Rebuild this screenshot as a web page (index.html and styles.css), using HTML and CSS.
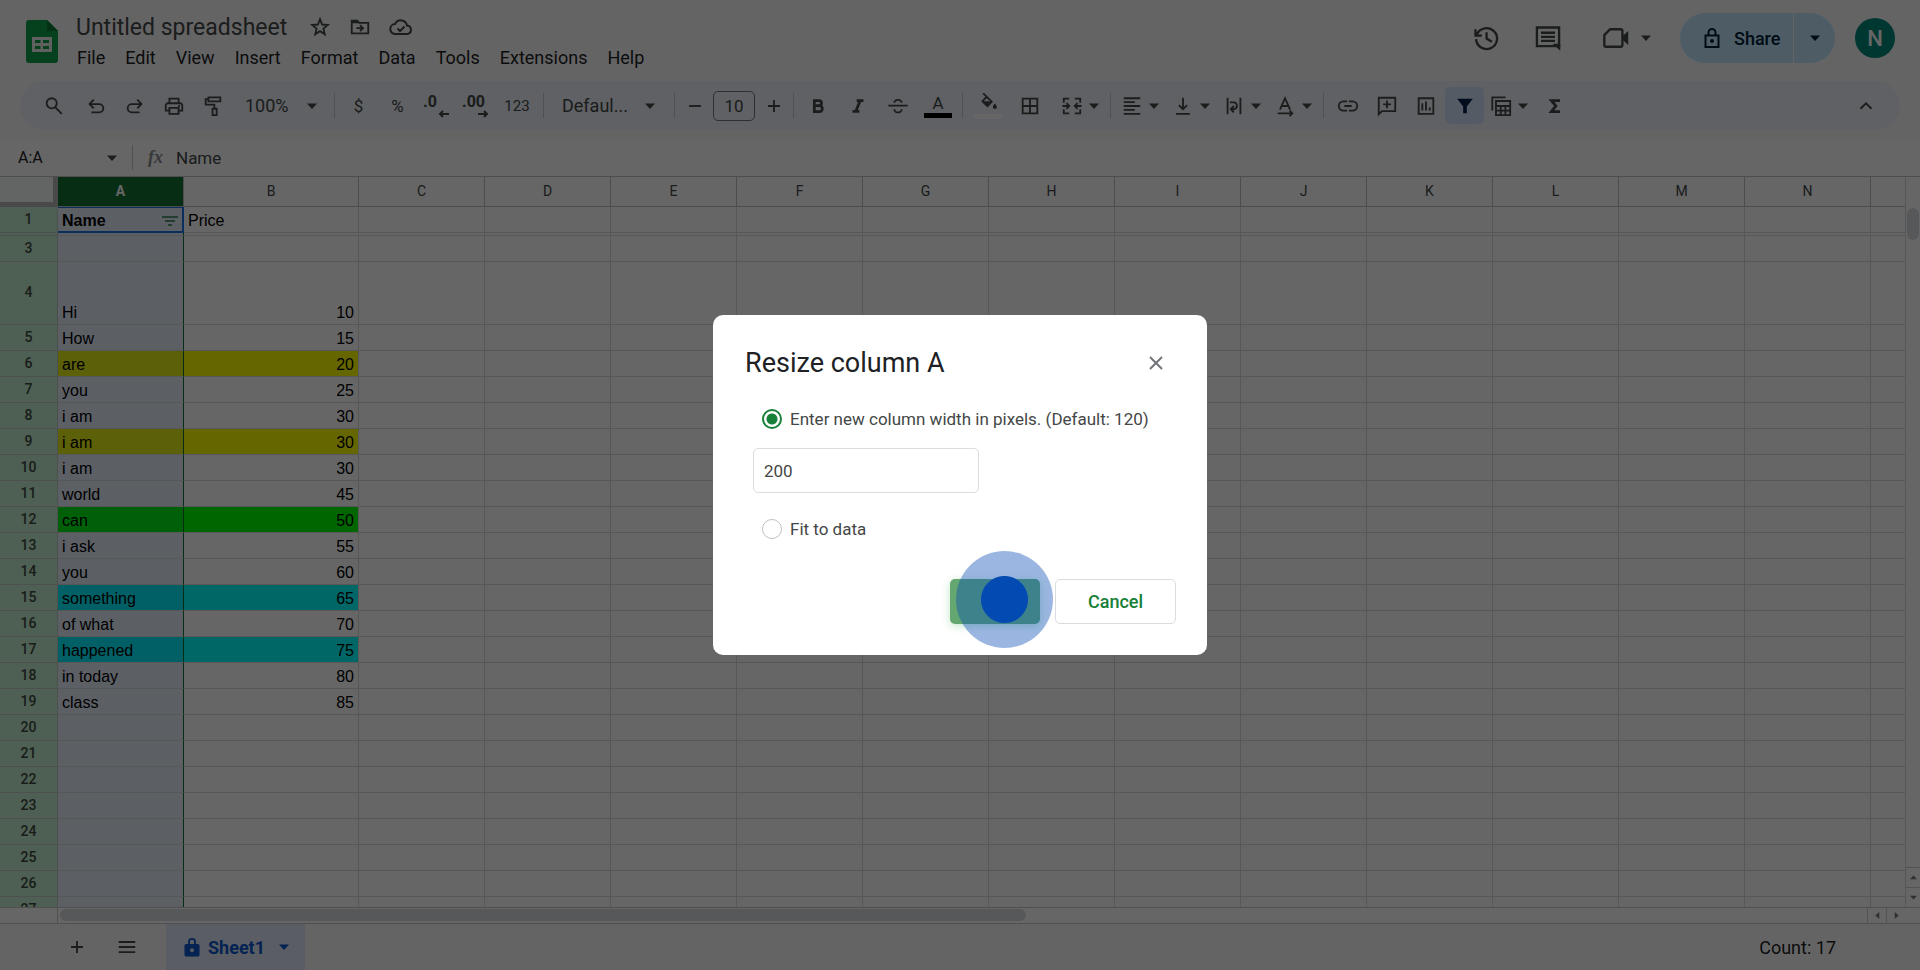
FILE: index.html
```
<!DOCTYPE html>
<html lang="en">
<head>
  <meta charset="UTF-8">
  <meta name="viewport" content="width=device-width, initial-scale=1.0">
  <title>Untitled spreadsheet</title>
  <link rel="stylesheet" href="styles.css">
</head>
<body>

  <!-- Shared icons -->
  <svg class="sprite" aria-hidden="true">
    <symbol id="caret" viewBox="0 0 10 10"><path d="M0 2.500h10L5 8z"/></symbol>
    <symbol id="lock" viewBox="0 0 16 20"><path fill-rule="evenodd" d="M4 7V5a4 4 0 0 1 8 0v2h2a1.500 1.500 0 0 1 1.500 1.500v9.500a1.500 1.500 0 0 1-1.500 1.500H2A1.500 1.500 0 0 1 .5 18V8.500A1.500 1.500 0 0 1 2 7zM5.800 7h4.400V5a2.200 2.200 0 0 0-4.400 0zM8 11.200a2 2 0 1 0 0 4 2 2 0 0 0 0-4z"/></symbol>
  </svg>

  <div class="app">
    <header class="header">
      <svg class="logo" viewBox="0 0 32 43">
        <path fill="#0fa24b" d="M3 0h18l11 11v29a3 3 0 0 1-3 3H3a3 3 0 0 1-3-3V3a3 3 0 0 1 3-3z"/>
        <path fill="#0a7a35" d="M21 0l11 11H21z"/>
        <path fill="#f1f1f1" fill-rule="evenodd" d="M6 17h20v15H6zm3 3v3h5.500v-3zm8 0v3h6v-3zm-8 6v3h5.500v-3zm8 0v3h6v-3z"/>
      </svg>
      <div class="doc">
        <div class="title-row">
          <h1>Untitled spreadsheet</h1>
          <button class="plain" aria-label="Star"><svg class="ico" viewBox="0 0 24 24"><path class="line" d="M12 3.500l2.300 5.800 6.200.5-4.800 4 1.500 6.200-5.200-3.400L6.800 20l1.500-6.200-4.800-4 6.200-.5z"/></svg></button>
          <button class="plain" aria-label="Move"><svg class="ico" viewBox="0 0 24 24"><path class="line" d="M3 5h6l2 2.500h10V19H3z"/><path d="M3 5h6l2 3H3z"/><path class="line" d="M8 13.300h7M12 10l3.300 3.300L12 16.500"/></svg></button>
          <button class="plain" aria-label="Document status"><svg class="ico-cloud" viewBox="0 0 24 24"><path class="line" d="M6.500 19a5 5 0 0 1-.4-10A6.300 6.300 0 0 1 18 10.500a4.300 4.300 0 0 1 .5 8.500z"/><path class="line" d="M8.500 13.500l2.500 2.500 4.500-4.500"/></svg></button>
        </div>
        <nav class="menus">
          <button>File</button>
          <button>Edit</button>
          <button>View</button>
          <button>Insert</button>
          <button>Format</button>
          <button>Data</button>
          <button>Tools</button>
          <button>Extensions</button>
          <button>Help</button>
        </nav>
      </div>
      <div class="header-actions">
        <button class="plain" aria-label="Version history"><svg class="ico-lg" viewBox="0 0 24 24"><path class="line" d="M4.200 9A9 9 0 1 1 3.500 13M3 4.500V10h5.500M12.500 7v5.500l4.500 2.700"/></svg></button>
        <button class="plain" aria-label="Comments"><svg class="ico-lg" viewBox="0 0 24 24"><path class="line" d="M2.500 3h19v16h-19z"/><path d="M22.500 23V17H16z"/><path class="line" d="M6 7.500h12M6 11h12M6 14.500h12"/></svg></button>
        <button class="plain meet" aria-label="Meet"><svg class="ico-lg" viewBox="0 0 24 24"><path class="line" d="M7 4.500h9a1.500 1.500 0 0 1 1.500 1.500v12a1.500 1.500 0 0 1-1.500 1.500H3.500A1.500 1.500 0 0 1 2 18V9.500z"/><path d="M17.500 10.500L22.500 6v12l-5-4.500z"/></svg><svg class="caret"><use href="#caret"/></svg></button>
        <div class="share">
          <button class="share-main"><svg class="share-lock" viewBox="0 0 16 20"><path class="line" d="M1.500 7.500h13V19h-13zM4.500 7V4.500a3.500 3.500 0 0 1 7 0V7"/><circle cx="8" cy="13" r="2"/></svg>Share</button>
          <button class="share-more" aria-label="Quick sharing"><svg class="caret"><use href="#caret"/></svg></button>
        </div>
        <button class="avatar" aria-label="Account">N</button>
      </div>
    </header>

    <div class="toolbar">
      <button class="tool search" aria-label="Search"><svg class="ico" viewBox="0 0 24 24"><circle class="line" cx="9.500" cy="9" r="5.500"/><path class="line" d="M13.500 13.500l7 7"/></svg></button>
      <button class="tool" aria-label="Undo"><svg class="ico" viewBox="0 0 24 24"><path class="line" d="M7 19h8.500a4.500 4.500 0 0 0 0-9H5M9.500 5L5 9.800l4.500 4.700"/></svg></button>
      <button class="tool" aria-label="Redo"><svg class="ico" viewBox="0 0 24 24"><path class="line" d="M17 19H8.500a4.500 4.500 0 0 1 0-9H19M14.500 5L19 9.800l-4.500 4.700"/></svg></button>
      <button class="tool" aria-label="Print"><svg class="ico" viewBox="0 0 24 24"><path class="line" d="M7 8V4h10v4M7 17H3v-5.500A2.500 2.500 0 0 1 5.500 9h13a2.500 2.500 0 0 1 2.500 2.500V17h-4M7 14h10v6.500H7z"/><circle cx="17.500" cy="12" r="1.200"/></svg></button>
      <button class="tool" aria-label="Paint format"><svg class="ico" viewBox="0 0 24 24"><path class="line" d="M7 2.500h13V7H7zM7 4.500H4v6h9.500V15M11.500 15H16v7h-4.500z"/></svg></button>
      <button class="zoom">100%<svg class="caret"><use href="#caret"/></svg></button>
      <span class="divider"></span>
      <button class="tool">$</button>
      <button class="tool">%</button>
      <button class="tool dec" aria-label="Decrease decimal places"><span>.0</span><svg viewBox="0 0 12 8"><path class="line" d="M11 4H2M5 1L2 4l3 3"/></svg></button>
      <button class="tool dec" aria-label="Increase decimal places"><span>.00</span><svg viewBox="0 0 12 8"><path class="line" d="M1 4h9M7 1l3 3-3 3"/></svg></button>
      <button class="tool formats">123</button>
      <span class="divider"></span>
      <button class="font-name">Defaul...<svg class="caret"><use href="#caret"/></svg></button>
      <span class="divider"></span>
      <button class="tool step" aria-label="Decrease font size"><svg class="ico" viewBox="0 0 24 24"><path class="line" d="M5.500 12h13"/></svg></button>
      <input class="font-size" type="text" value="10" aria-label="Font size">
      <button class="tool step" aria-label="Increase font size"><svg class="ico" viewBox="0 0 24 24"><path class="line" d="M5.500 12h13M12 5.500v13"/></svg></button>
      <span class="divider"></span>
      <button class="tool text-tool" aria-label="Bold"><svg class="ico" viewBox="0 0 24 24"><path class="bold" d="M8 6h5a2.800 2.800 0 0 1 0 5.700H8zM8 11.700h5.600a3.100 3.100 0 0 1 0 6.300H8z"/></svg></button>
      <button class="tool text-tool" aria-label="Italic"><svg class="ico" viewBox="0 0 24 24"><path class="bold" d="M10.500 6.200H18M6 17.800h7.500M14.200 6.500l-4.500 11"/></svg></button>
      <button class="tool text-tool" aria-label="Strikethrough"><svg class="ico" viewBox="0 0 24 24"><path class="line" d="M1.500 11.500h21M16 8.500a4 3.200 0 0 0-8 0M8 15.500a4 3.500 0 0 0 8 0"/></svg></button>
      <button class="tool text-tool color-tool" aria-label="Text color"><span>A</span><i class="swatch black"></i></button>
      <span class="divider"></span>
      <button class="tool cell-tool color-tool" aria-label="Fill color"><svg class="ico" viewBox="0 0 24 24"><path fill-rule="evenodd" d="M6 2l1.500-1.300 10 10-6 6.300-7-7L9.200 5.300zM10.500 6.800L7.300 10h7.300z"/><path d="M19.500 12.500s2.200 2.300 2.200 3.800a2.200 2.200 0 0 1-4.400 0c0-1.500 2.200-3.800 2.200-3.800z"/></svg><i class="swatch white"></i></button>
      <button class="tool cell-tool" aria-label="Borders"><svg class="ico" viewBox="0 0 24 24"><path class="line" d="M4 4h16v16H4zM12 4v16M4 12h16"/></svg></button>
      <button class="combo merge" aria-label="Merge cells"><svg class="ico" viewBox="0 0 24 24"><path class="line" d="M9 4H3v4.500M3 15.500V20h6M15 4h6v4.500M21 15.500V20h-6M1.500 12h7M6 8.800L9 12l-3 3.200M22.500 12h-7M18 8.800L15 12l3 3.200"/></svg><svg class="caret"><use href="#caret"/></svg></button>
      <span class="divider"></span>
      <button class="combo" aria-label="Horizontal align"><svg class="ico" viewBox="0 0 24 24"><path class="line" d="M3 3.500h18M3 7.800h12M3 12h18M3 16.200h12M3 20.500h18"/></svg><svg class="caret"><use href="#caret"/></svg></button>
      <button class="combo" aria-label="Vertical align"><svg class="ico" viewBox="0 0 24 24"><path class="line" d="M12 3v12M7.500 11l4.500 4.500 4.500-4.500M4.500 20.500h15"/></svg><svg class="caret"><use href="#caret"/></svg></button>
      <button class="combo" aria-label="Text wrapping"><svg class="ico" viewBox="0 0 24 24"><path class="line" d="M5 3v18M19 3v18M7.500 8H12a3.800 3.800 0 0 1 0 7.500H9M11.800 12l-3.300 3.500 3.300 3.500"/></svg><svg class="caret"><use href="#caret"/></svg></button>
      <button class="combo" aria-label="Text rotation"><svg class="ico" viewBox="0 0 24 24"><path class="line" d="M6.500 16L12 3.500 17.500 16M8.500 12h7M4 20h16M17 17l3 3-3 3"/></svg><svg class="caret"><use href="#caret"/></svg></button>
      <span class="divider"></span>
      <button class="tool" aria-label="Insert link"><svg class="ico" viewBox="0 0 24 24"><path class="line" d="M11 7H7a5 5 0 0 0 0 10h4M13 7h4a5 5 0 0 1 0 10h-4M8 12h8"/></svg></button>
      <button class="tool" aria-label="Insert comment"><svg class="ico" viewBox="0 0 24 24"><path class="line" d="M3 21V3h18v14.500H6.500zM12 6v8.500M7.800 10.200h8.500"/></svg></button>
      <button class="tool" aria-label="Insert chart"><svg class="ico" viewBox="0 0 24 24"><path class="line" d="M4 3.500h16v17H4zM8 9v8M12 7v10M16 13.500V17"/></svg></button>
      <button class="tool filter-on" aria-label="Remove filter"><svg class="ico" viewBox="0 0 24 24"><path d="M3.500 4h17L14 12.500V20h-4v-7.500z"/></svg></button>
      <button class="combo" aria-label="Table views"><svg class="ico" viewBox="0 0 24 24"><path class="line" d="M2.500 17V2.500H17M6.500 6.500H22V22H6.500zM6.500 12H22M6.500 17H22M11.700 12v10M16.800 12v10"/></svg><svg class="caret"><use href="#caret"/></svg></button>
      <button class="tool" aria-label="Functions"><svg class="ico" viewBox="0 0 24 24"><path class="bold" d="M17.500 6H8l5 6-5 6h9.500"/></svg></button>
      <button class="tool collapse" aria-label="Hide menus"><svg class="ico" viewBox="0 0 24 24"><path class="line" d="M6 15l6-6 6 6"/></svg></button>
    </div>

    <div class="formula-bar">
      <input class="name-box" type="text" value="A:A" aria-label="Name box">
      <svg class="caret"><use href="#caret"/></svg>
      <span class="divider"></span>
      <span class="fx">fx</span>
      <input class="formula" type="text" value="Name" aria-label="Formula">
    </div>

    <main class="sheet">
      <div class="grid">
        <table>
          <colgroup id="cols"></colgroup>
          <thead><tr id="letters"></tr></thead>
          <tbody id="rows"></tbody>
        </table>
      </div>
      <div class="v-scroll">
        <div class="v-thumb"></div>
        <button aria-label="Scroll up"><svg class="arrow up"><use href="#caret"/></svg></button>
        <button aria-label="Scroll down"><svg class="arrow"><use href="#caret"/></svg></button>
      </div>
    </main>

    <div class="h-scroll">
      <div class="h-track"><div class="h-thumb"></div></div>
      <button aria-label="Scroll left"><svg class="arrow left"><use href="#caret"/></svg></button>
      <button aria-label="Scroll right"><svg class="arrow right"><use href="#caret"/></svg></button>
    </div>

    <footer class="tabs">
      <button class="plain" aria-label="Add sheet"><svg class="ico" viewBox="0 0 24 24"><path class="line" d="M5.500 12h13M12 5.500v13"/></svg></button>
      <button class="plain" aria-label="All sheets"><svg class="ico" viewBox="0 0 24 24"><path class="line" d="M3 6.500h18M3 12h18M3 17.500h18"/></svg></button>
      <button class="tab"><svg class="tab-lock"><use href="#lock"/></svg>Sheet1<svg class="caret"><use href="#caret"/></svg></button>
      <span class="count">Count: 17</span>
    </footer>
  </div>

  <div class="backdrop">
    <form class="dialog" role="dialog" aria-labelledby="dialog-title">
      <div class="dialog-head">
        <h2 id="dialog-title">Resize column A</h2>
        <button type="button" class="close" aria-label="Close"><svg viewBox="0 0 14 14"><path class="line" d="M1 1l12 12M13 1L1 13"/></svg></button>
      </div>
      <label class="option"><input type="radio" name="size" checked> Enter new column width in pixels. (Default: 120)</label>
      <input class="width-input" type="text" value="200" aria-label="Column width in pixels">
      <label class="option"><input type="radio" name="size"> Fit to data</label>
      <div class="actions">
        <button type="button" class="ok" aria-label="OK"><span class="click-mark"></span></button>
        <button type="button" class="cancel">Cancel</button>
      </div>
    </form>
  </div>

  <script>
    // The last column is only partly in view, so it has no letter
    const letters = [...'ABCDEFGHIJKLMN', ''];
    const data = {
      1: ['Name', 'Price'], 4: ['Hi', 10], 5: ['How', 15], 6: ['are', 20, 'yellow'],
      7: ['you', 25], 8: ['i am', 30], 9: ['i am', 30, 'yellow'], 10: ['i am', 30],
      11: ['world', 45], 12: ['can', 50, 'green'], 13: ['i ask', 55], 14: ['you', 60],
      15: ['something', 65, 'cyan'], 16: ['of what', 70], 17: ['happened', 75, 'cyan'],
      18: ['in today', 80], 19: ['class', 85]
    };

    // Column widths and letters
    document.getElementById('cols').innerHTML = '<col class="col-num">' +
      letters.map(l => `<col class="${l === 'B' ? 'col-b' : 'col'}">`).join('');
    document.getElementById('letters').innerHTML = '<th class="corner"></th>' +
      letters.map(l => `<th class="${l === 'A' ? 'selected' : ''}">${l}</th>`).join('');

    // Rows, row 2 is hidden
    let html = '';
    for (let n = 1; n <= 27; n++) {
      if (n === 2) {
        html += '<tr class="frozen"><th></th>' + letters.map(l => `<td class="${l === 'A' ? 'a' : ''}"></td>`).join('') + '</tr>';
        continue;
      }
      const row = data[n] || ['', ''];
      const color = row[2] || '';
      html += `<tr class="${n === 1 ? 'head' : n === 4 ? 'tall' : ''}"><th>${n}</th>`;
      html += `<td class="a ${color}">${row[0]}${n === 1 ? '<svg class="filter" viewBox="0 0 16 10"><path d="M0 0h16v2H0zM3 4h10v2H3zM6 8h4v2H6z"/></svg>' : ''}</td>`;
      html += `<td class="b ${color}">${row[1]}</td>`;
      html += '<td></td>'.repeat(letters.length - 2) + '</tr>';
    }
    document.getElementById('rows').innerHTML = html;
  </script>

</body>
</html>
```
FILE: styles.css
```
* {
  box-sizing: border-box;
}

body {
  margin: 0;
  font-family: Roboto, Arial, sans-serif;
  font-size: 17px;
  color: #444746;
  background-color: #f9fbfd;
  overflow: hidden;
}

button {
  font: inherit;
  color: inherit;
  background: none;
  border: none;
  padding: 0;
  cursor: pointer;
}

input {
  font: inherit;
  color: inherit;
}

svg {
  display: block;
  flex: none;
  fill: currentColor;
}

.line {
  fill: none;
  stroke: currentColor;
  stroke-width: 2;
}

.bold {
  fill: none;
  stroke: currentColor;
  stroke-width: 3;
}

.sprite {
  position: absolute;
  width: 0;
  height: 0;
}

.ico {
  width: 22px;
  height: 22px;
}

.ico-cloud {
  width: 24px;
  height: 24px;
}

.ico-lg {
  width: 28px;
  height: 28px;
}

.caret {
  width: 10px;
  height: 10px;
}

.app {
  display: flex;
  flex-direction: column;
  height: 100vh;
}

/* Header */
.header {
  display: flex;
  height: 81px;
  padding: 0 25px 0 26px;
}

.logo {
  width: 32px;
  height: 43px;
  margin: 20px 18px 0 0;
}

.doc {
  padding-top: 13px;
}

.title-row {
  display: flex;
  align-items: center;
  gap: 18px;
  height: 28px;
}

h1 {
  margin: 0 4px 0 0;
  font-size: 23px;
  font-weight: 400;
}

.menus {
  display: flex;
  gap: 20px;
  height: 32px;
  padding-left: 1px;
  color: #1f1f1f;
  font-size: 18px;
}

.header-actions {
  display: flex;
  align-items: center;
  height: 50px;
  margin: 13px 0 0 auto;
}

.header-actions .plain {
  margin-right: 34px;
}

.header-actions .meet {
  display: flex;
  align-items: center;
  gap: 11px;
  margin: 0 29px 0 6px;
}

.share {
  display: flex;
  height: 50px;
  margin-right: 20px;
  color: #001d35;
  font-size: 18px;
  font-weight: 500;
}

.share-main {
  display: flex;
  align-items: center;
  gap: 14px;
  width: 113px;
  padding-left: 24px;
  border-radius: 25px 0 0 25px;
  background-color: #c2e7ff;
}

.share-lock {
  width: 16px;
  height: 20px;
}

.share-more {
  display: flex;
  align-items: center;
  justify-content: center;
  width: 41px;
  margin-left: 1px;
  border-radius: 0 25px 25px 0;
  background-color: #c2e7ff;
}

.avatar {
  width: 40px;
  height: 40px;
  border-radius: 50%;
  background-color: #00897b;
  color: #fff;
  font-size: 22px;
  font-weight: 500;
}

/* Toolbar */
.toolbar {
  display: flex;
  align-items: center;
  height: 49px;
  margin: 0 20px 9px;
  padding: 0 15px 0 14px;
  border-radius: 25px;
  background-color: #edf2fa;
}

.tool {
  display: flex;
  align-items: center;
  justify-content: center;
  flex: none;
  width: 39px;
  height: 37px;
}

.search {
  margin-right: 3px;
}

.divider {
  flex: none;
  width: 1px;
  height: 25px;
  margin: 0 4px;
  background-color: #c7c7c7;
}

.zoom,
.font-name {
  display: flex;
  align-items: center;
  justify-content: space-between;
  width: 98px;
  padding: 0 13px;
  font-size: 18px;
}

.font-name {
  width: 122px;
  padding: 0 15px 0 14px;
}

.dec {
  flex-direction: column;
  align-items: flex-start;
  padding: 0 6px;
  font-size: 16px;
  font-weight: 700;
  line-height: 17px;
}

.dec svg {
  align-self: flex-end;
  width: 12px;
  height: 8px;
}

.formats {
  width: 44px;
  font-size: 15px;
}

.step {
  width: 31px;
}

.font-size {
  width: 42px;
  height: 30px;
  margin: 0 3px;
  padding: 0;
  border: 1px solid #747775;
  border-radius: 5px;
  background: none;
  text-align: center;
}

.text-tool {
  width: 40px;
}

.cell-tool {
  width: 42px;
}

.color-tool {
  flex-direction: column;
  line-height: 20px;
}

.swatch {
  width: 28px;
  height: 5px;
}

.black {
  background-color: #000;
}

.white {
  background-color: #fff;
}

.combo {
  display: flex;
  align-items: center;
  gap: 6px;
  flex: none;
  width: 51px;
  height: 37px;
  padding-left: 6px;
}

.merge {
  width: 55px;
  padding-left: 10px;
}

.filter-on {
  border-radius: 5px;
  background-color: #d3e3fd;
  color: #041e49;
}

.collapse {
  margin-left: auto;
}

/* Formula bar */
.formula-bar {
  display: flex;
  align-items: center;
  height: 38px;
  padding-left: 18px;
  border-bottom: 1px solid #c0c0c0;
  background-color: #fff;
}

.formula-bar input {
  padding: 0;
  border: none;
  background: none;
}

.formula-bar .name-box {
  width: 89px;
  font-size: 16px;
  color: #202124;
}

.formula-bar .divider {
  margin: 0 15px;
}

.fx {
  width: 28px;
  color: #8a8d90;
  font: italic 700 18px "Liberation Serif", serif;
}

.formula {
  flex: 1;
}

/* Sheet */
.sheet {
  display: flex;
  flex: 1;
  min-height: 0;
  background-color: #fff;
}

.grid {
  flex: 1;
  min-width: 0;
  overflow: hidden;
}

table {
  width: 0;
  table-layout: fixed;
  border-spacing: 0;
  font: 16px/20px "Liberation Sans", Arial, sans-serif;
  color: #000;
}

.col {
  width: 126px;
}

.col-num {
  width: 58px;
}

.col-b {
  width: 175px;
}

th,
td {
  height: 26px;
  padding: 0 4px 1px;
  border-right: 1px solid #dadada;
  border-bottom: 1px solid #dadada;
  vertical-align: bottom;
  white-space: nowrap;
}

thead th {
  height: 30px;
  border-color: #c0c0c0;
  font: 14px/20px Roboto, Arial, sans-serif;
  color: #444746;
  vertical-align: middle;
}

thead .selected {
  background-color: #137333;
  color: #fff;
  font-weight: 700;
}

thead .corner {
  background-color: #f8f9fa;
  border-right: 5px solid #b7b7b7;
  border-bottom: 5px solid #b7b7b7;
}

tbody th {
  padding: 0 0 2px;
  background-color: #c4eed0;
  border-color: #bfc8c2;
  color: #3c4a40;
  font: 500 14px/20px Roboto, Arial, sans-serif;
  vertical-align: middle;
}

.a {
  border-right: 1px solid #137333;
  background-image: linear-gradient(rgba(14, 101, 235, 0.1), rgba(14, 101, 235, 0.1));
}

.b {
  text-align: right;
}

.head .a {
  padding-bottom: 0;
  border-right: 2px solid #1a73e8;
  border-bottom: 2px solid #1a73e8;
  border-top: 1px solid #1a73e8;
  font-weight: 700;
}

.head .b {
  text-align: left;
}

.filter {
  float: right;
  width: 16px;
  height: 10px;
  margin-top: 5px;
  color: #5a9a78;
}

.frozen th,
.frozen td {
  height: 3px;
  padding: 0;
}

.tall td {
  height: 63px;
}

.yellow {
  background-color: #ff0;
}

.green {
  background-color: #0f0;
}

.cyan {
  background-color: #0ff;
}

/* Scroll bars */
.v-scroll {
  display: flex;
  flex-direction: column;
  width: 15px;
  border-left: 1px solid #dadada;
}

.v-thumb {
  height: 32px;
  margin: 31px 1px auto;
  border-radius: 7px;
  background-color: #dadce0;
}

.v-scroll button {
  display: flex;
  align-items: center;
  justify-content: center;
  height: 20px;
  border-top: 1px solid #d0d0d0;
}

.arrow {
  width: 7px;
  height: 7px;
  color: #777;
}

.up {
  transform: rotate(180deg);
}

.left {
  transform: rotate(90deg);
}

.right {
  transform: rotate(-90deg);
}

.h-scroll {
  display: flex;
  height: 16px;
  padding: 0 15px 0 57px;
  border-top: 1px solid #c8c8c8;
  background-color: #fff;
}

.h-track {
  flex: 1;
  padding: 1px 2px;
  border-left: 1px solid #c8c8c8;
}

.h-thumb {
  width: 53.5%;
  height: 12px;
  border-radius: 6px;
  background-color: #dadce0;
}

.h-scroll button {
  display: flex;
  align-items: center;
  justify-content: center;
  width: 19px;
  border-left: 1px solid #d0d0d0;
}

/* Sheet tabs */
.tabs {
  display: flex;
  align-items: center;
  height: 47px;
  padding-left: 66px;
  border-top: 1px solid #c8c8c8;
  font-size: 18px;
}

.tabs .plain {
  margin-right: 28px;
}

.tab {
  display: flex;
  align-items: center;
  align-self: stretch;
  width: 139px;
  padding-left: 18px;
  background-color: #e1e9f7;
  color: #0b57d0;
  font-weight: 700;
}

.tab-lock {
  width: 16px;
  height: 20px;
  margin-right: 8px;
}

.tab .caret {
  margin-left: 14px;
}

.count {
  margin: 0 84px 0 auto;
  color: #1f1f1f;
}

/* Dialog */
.backdrop {
  position: fixed;
  inset: 0;
  display: flex;
  align-items: center;
  justify-content: center;
  background-color: rgba(0, 0, 0, 0.6);
}

.dialog {
  width: 494px;
  padding: 31px 31px 31px 32px;
  border-radius: 10px;
  background-color: #fff;
}

.dialog-head {
  display: flex;
  align-items: center;
  justify-content: space-between;
  height: 34px;
  margin-bottom: 26px;
}

h2 {
  margin: 0;
  color: #202124;
  font-size: 27px;
  font-weight: 400;
}

.close {
  width: 14px;
  margin-right: 13px;
  color: #70757a;
}

.option {
  display: flex;
  align-items: center;
  gap: 8px;
  height: 26px;
  margin-left: 17px;
  color: #444746;
  white-space: nowrap;
}

.option input {
  appearance: none;
  width: 20px;
  height: 20px;
  margin: 0;
  border: 1px solid #bdc1c6;
  border-radius: 50%;
}

.option input:checked {
  border: 2px solid #188038;
  background: radial-gradient(circle, #188038 5px, transparent 6px);
}

.width-input {
  display: block;
  width: 226px;
  height: 45px;
  margin: 16px 0 23px 8px;
  padding: 0 10px;
  border: 1px solid #dadce0;
  border-radius: 5px;
}

.actions {
  display: flex;
  justify-content: flex-end;
  gap: 15px;
  margin-top: 37px;
}

.ok {
  position: relative;
  width: 90px;
  height: 45px;
  border-radius: 5px;
  background-color: #64a771;
  box-shadow: 0 2px 8px rgba(52, 168, 83, 0.3);
}

/* Click highlight drawn over the button */
.click-mark {
  position: absolute;
  top: -28px;
  left: 6px;
  width: 97px;
  height: 97px;
  border-radius: 50%;
  background: radial-gradient(circle, #044ab3 23px, rgba(4, 74, 179, 0.4) 24px);
}

.cancel {
  width: 121px;
  height: 45px;
  border: 1px solid #dadce0;
  border-radius: 5px;
  color: #188038;
  font-size: 18px;
  font-weight: 500;
}
```
